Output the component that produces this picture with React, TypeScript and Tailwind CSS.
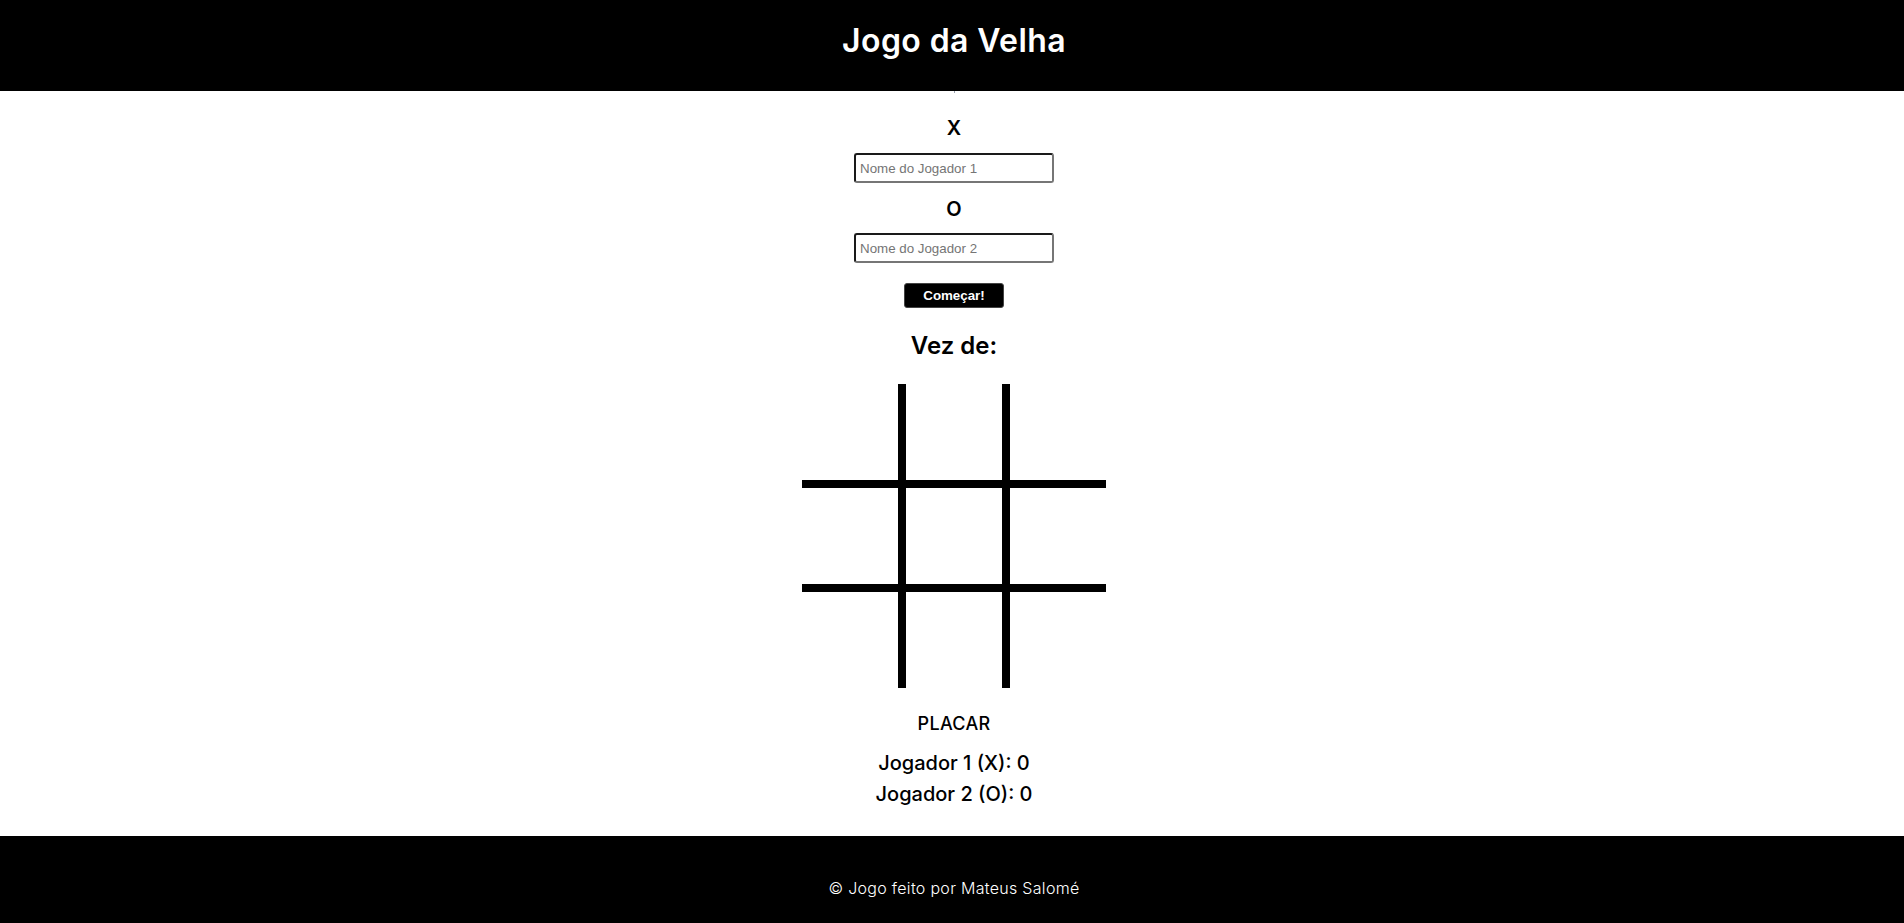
import { useState } from "react";

const poppins = "font-['Inter','Noto_Sans',sans-serif]";

export default function App() {
  const [board, setBoard] = useState<string[]>(Array(9).fill(""));
  const [p1, setP1] = useState("");
  const [p2, setP2] = useState("");

  function play(i: number) {
    if (board[i]) return;
    const next = [...board];
    next[i] = board.filter(Boolean).length % 2 === 0 ? "X" : "O";
    setBoard(next);
  }

  return (
    <div className={`min-h-screen flex flex-col bg-white text-black ${poppins}`}>
      <header className="h-[91px] bg-black flex items-center justify-center pb-[10px] pl-1">
        <h1 className="text-[32px] leading-[40px] font-semibold tracking-[0.4px] text-white">Jogo da Velha</h1>
      </header>

      <main className="flex flex-col items-center pl-1">
        <div className="w-px h-[2px] bg-gray-400" />
        <h3 className="mt-[20px] text-[20px] leading-[30px] font-semibold">X</h3>
        <input
          value={p1}
          onChange={(e) => setP1(e.target.value)}
          placeholder="Nome do Jogador 1"
          className="mt-[10px] w-[200px] h-[30px] px-[4px] text-[13.33px] font-['Liberation_Sans',Arial,sans-serif] border-2 border-t-[#1a1a1a] border-l-[#1a1a1a] border-r-[#767676] border-b-[#767676] rounded-[3px] placeholder:text-[#757575] outline-none"
        />
        <h3 className="mt-[11px] text-[20px] leading-[30px] font-semibold">O</h3>
        <input
          value={p2}
          onChange={(e) => setP2(e.target.value)}
          placeholder="Nome do Jogador 2"
          className="mt-[9px] w-[200px] h-[30px] px-[4px] text-[13.33px] font-['Liberation_Sans',Arial,sans-serif] border-2 border-t-[#1a1a1a] border-l-[#1a1a1a] border-r-[#767676] border-b-[#767676] rounded-[3px] placeholder:text-[#757575] outline-none"
        />
        <button
          onClick={() => setBoard(Array(9).fill(""))}
          className="mt-[20px] w-[100px] h-[25px] bg-black text-white text-[13.33px] font-bold font-['Liberation_Sans',Arial,sans-serif] border border-[#444] rounded-[3px]"
        >
          Começar!
        </button>

        <h2 className="mt-[22px] text-[24px] leading-[32px] font-semibold">Vez de:</h2>

        <div className="mt-[22px] grid grid-cols-[96px_96px_96px] grid-rows-[96px_96px_96px] gap-2 bg-black">
          {board.map((v, i) => (
            <div
              key={i}
              onClick={() => play(i)}
              className="bg-white flex items-center justify-center text-[56px] font-semibold cursor-pointer"
            >
              {v}
            </div>
          ))}
        </div>

        <h3 className="mt-[22px] text-[18px] leading-[27px] font-medium tracking-[0.3px]">PLACAR</h3>
        <p className="mt-[11px] text-[20px] leading-[31px] font-medium">Jogador 1 (X): 0</p>
        <p className="text-[20px] leading-[31px] font-medium">Jogador 2 (O): 0</p>
      </main>

      <footer className="mt-[26px] h-[88px] bg-black flex items-center justify-center pt-[16px] pl-1">
        <p className="text-[16px] font-light tracking-[0.3px] text-white">© Jogo feito por Mateus Salomé</p>
      </footer>
    </div>
  );
}
